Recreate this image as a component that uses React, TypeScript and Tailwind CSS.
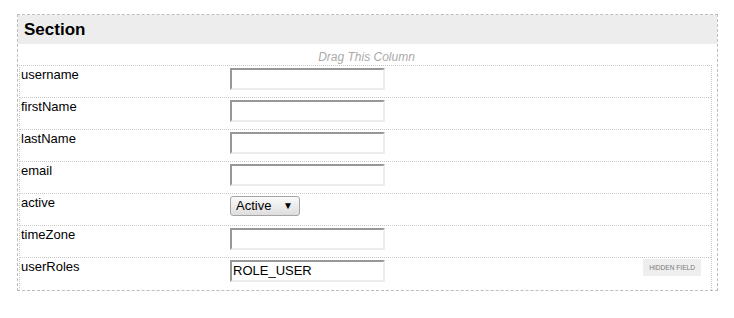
const fields = [
  { name: "username", kind: "text", value: "" },
  { name: "firstName", kind: "text", value: "" },
  { name: "lastName", kind: "text", value: "" },
  { name: "email", kind: "text", value: "" },
  { name: "active", kind: "select", value: "Active" },
  { name: "timeZone", kind: "text", value: "" },
  { name: "userRoles", kind: "text", value: "ROLE_USER", hidden: true },
];

function FieldInput({ value }: { value: string }) {
  return (
    <div className="w-[155px] h-[22px] border-2 border-t-[#979797] border-l-[#979797] border-r-[#ececec] border-b-[#ececec] bg-white pl-[1px] text-[13px] leading-[18px] text-black">
      {value}
    </div>
  );
}

function FieldSelect({ value }: { value: string }) {
  return (
    <div className="w-[70px] h-[20px] flex items-center justify-between rounded-[3px] border border-[#a5a5a5] bg-gradient-to-b from-[#fbfbfb] to-[#dedede] pl-[5px] pr-[6px] text-[13px] text-black">
      <span>{value}</span>
      <span className="text-[10px] leading-none">▼</span>
    </div>
  );
}

export default function App() {
  return (
    <div className="w-[734px] h-[318px] bg-white pt-[14px] pl-[17px] font-['Liberation_Sans',Arial,sans-serif]">
      <div className="w-[701px] border border-dashed border-[#bdbdbd]">
        {/* Section header */}
        <div className="h-[29px] bg-[#ededed] flex items-center pl-[6px]">
          <span className="text-[17px] font-bold text-black">Section</span>
        </div>

        {/* Drag handle */}
        <div className="h-[21px] flex items-end justify-center pb-[1px] pr-[2px]">
          <span className="text-[12px] italic text-[#aaaaaa] leading-[14px]">Drag This Column</span>
        </div>

        {/* Field rows */}
        <div className="ml-[1px] mr-[5px] border-t border-x border-dotted border-[#c8c8c8]">
          {fields.map((f, i) => (
            <div
              key={f.name}
              className={
                "h-[32px] flex " +
                (i < fields.length - 1 ? "border-b border-dotted border-[#c8c8c8]" : "")
              }
            >
              <div className="w-[210px] pl-[1px] pt-[1px] text-[13px] leading-[16px] text-black">{f.name}</div>
              <div className="flex-1 pt-[2px]">
                {f.kind === "select" ? <FieldSelect value={f.value} /> : <FieldInput value={f.value} />}
              </div>
              {f.hidden && (
                <div className="pt-[1px] pr-[10px]">
                  <div className="h-[17px] px-[6px] flex items-center bg-[#eeeeee] text-[6.6px] text-[#777777]">
                    HIDDEN FIELD
                  </div>
                </div>
              )}
            </div>
          ))}
        </div>
      </div>
    </div>
  );
}
